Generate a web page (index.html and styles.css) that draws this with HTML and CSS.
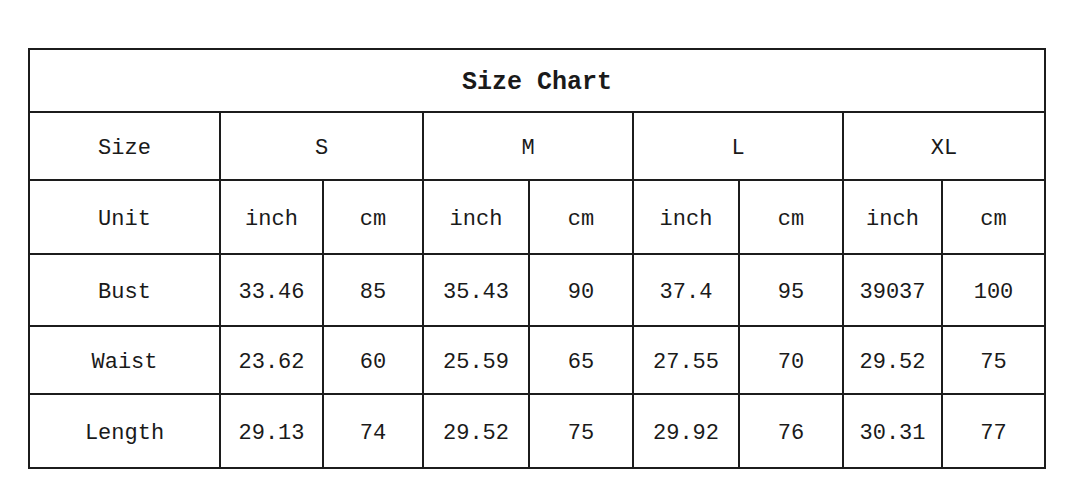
FILE: index.html
```html
<!DOCTYPE html>
<html>
<head>
<meta charset="utf-8">
<link rel="stylesheet" href="styles.css">
</head>
<body>
<div class="chart">
  <div class="cell title">Size Chart</div>

  <div class="cell">Size</div>
  <div class="cell span2">S</div>
  <div class="cell span2">M</div>
  <div class="cell span2">L</div>
  <div class="cell span2">XL</div>

  <div class="cell">Unit</div>
  <div class="cell">inch</div><div class="cell">cm</div>
  <div class="cell">inch</div><div class="cell">cm</div>
  <div class="cell">inch</div><div class="cell">cm</div>
  <div class="cell">inch</div><div class="cell">cm</div>

  <div class="cell">Bust</div>
  <div class="cell">33.46</div><div class="cell">85</div>
  <div class="cell">35.43</div><div class="cell">90</div>
  <div class="cell">37.4</div><div class="cell">95</div>
  <div class="cell">39037</div><div class="cell">100</div>

  <div class="cell">Waist</div>
  <div class="cell">23.62</div><div class="cell">60</div>
  <div class="cell">25.59</div><div class="cell">65</div>
  <div class="cell">27.55</div><div class="cell">70</div>
  <div class="cell">29.52</div><div class="cell">75</div>

  <div class="cell">Length</div>
  <div class="cell">29.13</div><div class="cell">74</div>
  <div class="cell">29.52</div><div class="cell">75</div>
  <div class="cell">29.92</div><div class="cell">76</div>
  <div class="cell">30.31</div><div class="cell">77</div>
</div>
</body>
</html>
```

FILE: styles.css
```css
html, body {
  margin: 0;
  background: #ffffff;
}

body {
  padding: 48px 0 0 28px;
  font-family: "Liberation Mono", "DejaVu Sans Mono", monospace;
  color: #1a1a1a;
}

.chart {
  display: inline-grid;
  grid-template-columns: 189px 101px 98px 104px 102px 104px 102px 97px 101px;
  grid-template-rows: 61px 66px 72px 70px 66px 72px;
  gap: 2px;
  padding: 2px;
  background: #1c1c1c;
}

.cell {
  background: #ffffff;
  display: flex;
  align-items: center;
  justify-content: center;
  font-size: 22px;
  padding-top: 5px;
  box-sizing: border-box;
}

.title {
  grid-column: 1 / -1;
  font-weight: bold;
  font-size: 25px;
  padding-top: 4px;
}

.span2 {
  grid-column: span 2;
}
```
